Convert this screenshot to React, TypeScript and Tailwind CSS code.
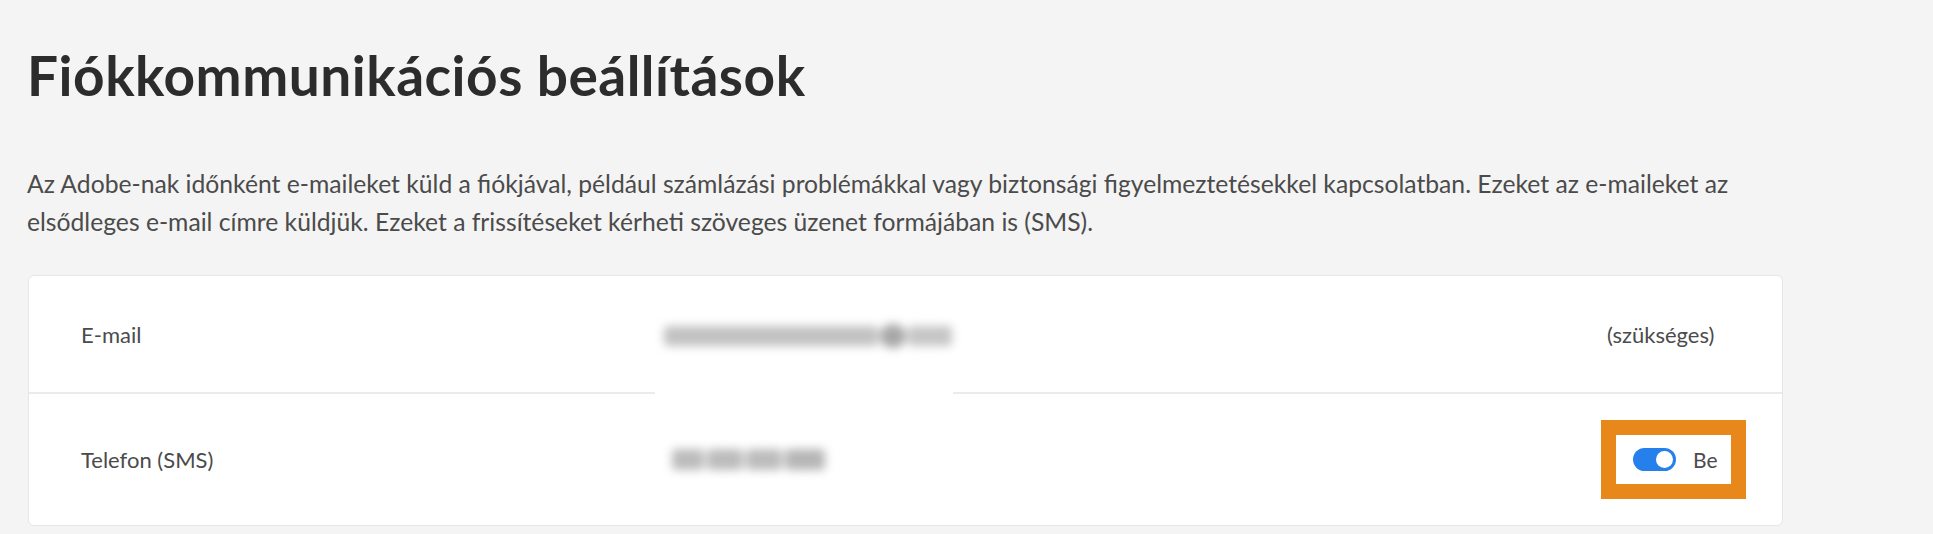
import React from "react";

const font = { fontFamily: "Lato, 'Open Sans', sans-serif" };

function Toggle({ on }: { on: boolean }) {
  return (
    <div
      className={
        "flex h-[23px] w-[43px] items-center rounded-full px-[3px] " +
        (on ? "justify-end bg-[#2680eb]" : "justify-start bg-[#b3b3b3]")
      }
    >
      <div className="h-[17px] w-[17px] rounded-full bg-white" />
    </div>
  );
}

// blurred placeholder for hidden personal data
function BlurredEmail() {
  return (
    <div className="relative h-[30px] w-[300px]">
      <div className="absolute left-[-5px] top-0 h-[84px] w-[298px] bg-white" />
      <div className="absolute left-[4px] top-[5px] flex items-center gap-[2px] blur-[5px]">
        <div className="h-[20px] w-[214px] rounded-sm bg-[#c2c2c2]" />
        <div className="h-[24px] w-[26px] rounded-full bg-[#a8a8a8]" />
        <div className="h-[20px] w-[44px] rounded-sm bg-[#c6c6c6]" />
      </div>
    </div>
  );
}

function BlurredPhone() {
  return (
    <div className="flex items-center gap-[3px] pl-[12px] blur-[5px]">
      <div className="h-[21px] w-[32px] rounded-sm bg-[#bcbcbc]" />
      <div className="h-[21px] w-[36px] rounded-sm bg-[#bcbcbc]" />
      <div className="h-[21px] w-[36px] rounded-sm bg-[#bcbcbc]" />
      <div className="h-[21px] w-[40px] rounded-sm bg-[#b6b6b6]" />
    </div>
  );
}

function App() {
  return (
    <div className="min-h-screen bg-[#f4f4f4] px-[27px] pt-[48px]" style={font}>
      <h1 className="text-[55px] font-bold leading-none tracking-[0.5px] text-[#2c2c2c]">
        Fiókkommunikációs beállítások
      </h1>

      <p className="mt-[62px] max-w-[1720px] text-[24.7px] leading-[38px] text-[#4b4b4b]">
        Az Adobe-nak időnként e-maileket küld a fiókjával, például számlázási
        problémákkal vagy biztonsági figyelmeztetésekkel kapcsolatban. Ezeket az
        e-maileket az elsődleges e-mail címre küldjük. Ezeket a frissítéseket
        kérheti szöveges üzenet formájában is (SMS).
      </p>

      <div className="ml-px mt-[34px] w-[1755px] overflow-hidden rounded-[6px] border border-[#e6e6e6] bg-white text-[22px] text-[#4b4b4b]">
        <div className="grid h-[116px] grid-cols-[579px_1fr_145px] items-center pl-[52px] pr-[36px]">
          <span>E-mail</span>
          <div className="relative z-10">
            <BlurredEmail />
          </div>
          <span className="pl-[6px]">(szükséges)</span>
        </div>

        <div className="h-[2px] bg-[#ebebeb]" />

        <div className="grid h-[131px] grid-cols-[579px_1fr_145px] items-center pl-[52px] pr-[36px]">
          <span>Telefon (SMS)</span>
          <BlurredPhone />
          <div className="flex h-[79px] items-center gap-[17px] border-[15px] border-[#e8871a] bg-white pl-[17px]">
            <Toggle on />
            <span className="text-[21px]">Be</span>
          </div>
        </div>
      </div>
    </div>
  );
}

export default App;
